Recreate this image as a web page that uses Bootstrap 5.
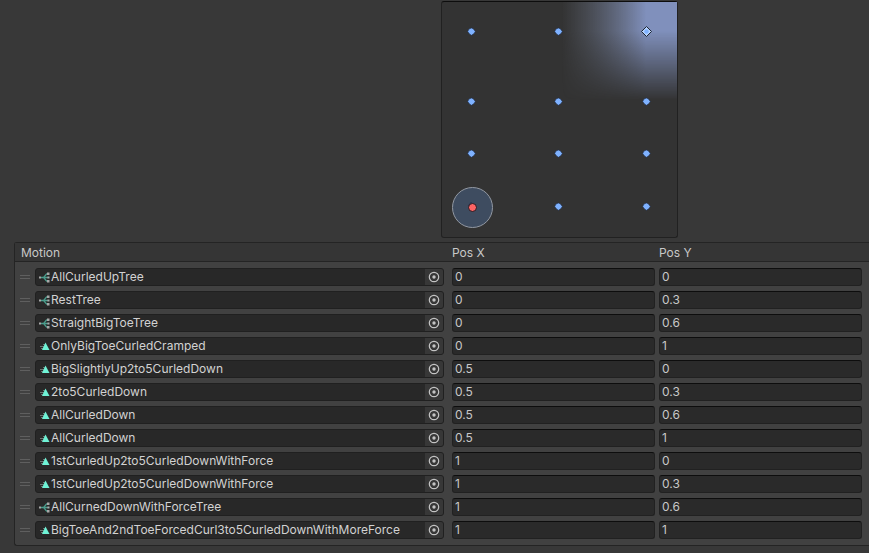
<!DOCTYPE html>
<html lang="en" data-bs-theme="dark">
<head>
<meta charset="utf-8">
<meta name="viewport" content="width=device-width, initial-scale=1">
<title>Blend Tree</title>
<link rel="stylesheet" href="https://cdn.jsdelivr.net/npm/bootstrap@5.3.0/dist/css/bootstrap.min.css">
<style>
body { background: #383838; color: #c8c8c8; font: 12px/16px Inter, "Liberation Sans", sans-serif; }
.graph-area { padding: 1px 0 4px 250px; }
.blend-graph { width: 237px; height: 237px; background: #333; border: 1px solid #212121; border-top-color: #0d0d0d; border-radius: 3px; }
.motion-panel { margin-left: 14px; background: #414141; border: 1px solid #242424; border-right: 0; border-radius: 3px 0 0 3px; padding-bottom: 4px; }
.motion-table tr { display: grid; grid-template-columns: 20px minmax(0, 409fr) minmax(0, 203fr) minmax(0, 203fr); column-gap: 4px; padding-right: 7px; }
.motion-table td, .motion-table th { padding: 0; font-weight: 400; }
.motion-table thead tr { background: #353535; border-bottom: 1px solid #242424; height: 19px; line-height: 20px; margin-bottom: 3px; }
.motion-table tbody tr { height: 23px; align-items: center; }
.motion-table .motion-cell { margin-left: -4px; padding-right: 4px; }
.motion-title { grid-column: 1 / 3; padding-left: 6px !important; }
.field-box { height: 18px; background: #2a2a2a; border: 1px solid #212121; border-top-color: #0d0d0d; border-radius: 3px; color: #d2d2d2; }
.object-box { border-color: #202020; background: #282828; }
.object-box input, .value-box { font: inherit; color: inherit; min-width: 0; outline: 0; }
.object-box input { background: none; border: 0; padding: 0; }
.value-box { display: block; width: 100%; padding: 0 2px; }
.pick { width: 18px; background: #373737; color: #c4c4c4; border: 0; padding: 0; border-radius: 0 2px 2px 0; }
.grip { width: 10px; height: 4px; border: solid #5f5f5f; border-width: 1px 0; margin-left: 5px; }
.asset { width: 12px; height: 12px; margin-left: 3px; }
svg { display: block; flex: none; }
</style>
<script src="https://cdn.jsdelivr.net/npm/bootstrap@5.3.0/dist/js/bootstrap.bundle.min.js"></script>
</head>
<body class="overflow-x-hidden">
<svg width="0" height="0" class="position-absolute" aria-hidden="true">
  <symbol id="tree" viewBox="0 0 12 12">
    <path d="M2 6.500h7M4 6.500c2 0 2-4 5-4M4 6.500c2 0 2 4 5 4" stroke="#4a9c8c" stroke-width="1.300" fill="none"/>
    <path d="M0 5.500h2v2H0zM8 1.500h2.500v2.500H8zM8.500 5.500h2v2h-2zM8 9h2.500v2.500H8z" fill="#a8a8a8"/>
  </symbol>
  <symbol id="clip" viewBox="0 0 12 12">
    <path d="M1 6.500h4M2 8.500h3M4 4.500h2" stroke="#6c7573" fill="none"/>
    <path d="M6.500 2.500 10.500 10H3z" fill="#6ff3d6"/>
  </symbol>
  <symbol id="target" viewBox="0 0 12 12">
    <circle cx="6" cy="6" r="4.700" fill="none" stroke="currentColor" stroke-width="1.200"/>
    <circle cx="6" cy="6" r="1.700" fill="currentColor"/>
  </symbol>
</svg>
<main>
  <div class="graph-area d-flex justify-content-center">
    <div class="blend-graph">
      <svg width="235" height="235" viewBox="0 0 235 235" role="img" aria-label="Blend positions">
        <defs>
          <linearGradient id="across" gradientUnits="userSpaceOnUse" x1="120" y1="0" x2="204" y2="0">
            <stop offset="0" stop-color="#6c7486" stop-opacity="0"/>
            <stop offset=".2" stop-color="#6c7486" stop-opacity=".24"/>
            <stop offset="1" stop-color="#8090bc"/>
          </linearGradient>
          <linearGradient id="down" gradientUnits="userSpaceOnUse" x1="0" y1="29" x2="0" y2="98">
            <stop offset="0" stop-color="#fff"/>
            <stop offset="1" stop-color="#fff" stop-opacity="0"/>
          </linearGradient>
          <mask id="fade" style="mask-type:alpha"><rect width="235" height="235" fill="url(#down)"/></mask>
          <path id="pt" d="M0-3.500 2-2.500 3.800 0 2.500 2 0 3.800-2 2.500-3.800 0-2.500-2.500z" fill="#7fb2ff" stroke="#203050" stroke-width=".6"/>
        </defs>
        <rect x="120" width="115" height="98" fill="url(#across)" mask="url(#fade)"/>
        <g>
          <use href="#pt" x="29.500" y="29.500"/><use href="#pt" x="116.500" y="29.500"/>
          <use href="#pt" x="29.500" y="99.500"/><use href="#pt" x="116.500" y="99.500"/><use href="#pt" x="204.500" y="99.500"/>
          <use href="#pt" x="29.500" y="151.500"/><use href="#pt" x="116.500" y="151.500"/><use href="#pt" x="204.500" y="151.500"/>
          <use href="#pt" x="116.500" y="204.500"/><use href="#pt" x="204.500" y="204.500"/>
        </g>
        <path d="M204.500 24.500l5 5-5 5-5-5z" fill="#b8d4ff" stroke="#1c2430"/>
        <circle cx="204.500" cy="29.500" r="2.200" fill="#7fb2ff"/>
        <circle cx="30.500" cy="205.500" r="20" fill="#3e4c60" stroke="#9298a2"/>
        <path d="M26 204l3.500-4" stroke="#203050"/>
        <circle cx="30.500" cy="205.500" r="4" fill="#ff6464" stroke="#221c24"/>
      </svg>
    </div>
  </div>
  <section class="motion-panel">
    <table class="motion-table d-block">
      <thead class="d-block"><tr><th scope="col" class="motion-title">Motion</th><th scope="col">Pos X</th><th scope="col">Pos Y</th></tr></thead>
      <tbody class="d-block" id="motions"></tbody>
    </table>
  </section>
</main>
<script>
const motions = [
  ["tree", "AllCurledUpTree", "0", "0"],
  ["tree", "RestTree", "0", "0.3"],
  ["tree", "StraightBigToeTree", "0", "0.6"],
  ["clip", "OnlyBigToeCurledCramped", "0", "1"],
  ["clip", "BigSlightlyUp2to5CurledDown", "0.5", "0"],
  ["clip", "2to5CurledDown", "0.5", "0.3"],
  ["clip", "AllCurledDown", "0.5", "0.6"],
  ["clip", "AllCurledDown", "0.5", "1"],
  ["clip", "1stCurledUp2to5CurledDownWithForce", "1", "0"],
  ["clip", "1stCurledUp2to5CurledDownWithForce", "1", "0.3"],
  ["tree", "AllCurnedDownWithForceTree", "1", "0.6"],
  ["clip", "BigToeAnd2ndToeForcedCurl3to5CurledDownWithMoreForce", "1", "1"]
];
document.getElementById("motions").innerHTML = motions.map(([icon, name, x, y]) => `
  <tr>
    <td><div class="grip"></div></td>
    <td class="motion-cell"><div class="field-box object-box d-flex">
      <svg class="asset align-self-center" aria-hidden="true"><use href="#${icon}"/></svg>
      <input class="flex-grow-1" type="text" value="${name}" aria-label="Motion">
      <button class="pick d-flex align-items-center justify-content-center" type="button" aria-label="Select motion"><svg width="12" height="12"><use href="#target"/></svg></button>
    </div></td>
    <td><input class="field-box value-box" type="text" value="${x}" aria-label="Pos X"></td>
    <td><input class="field-box value-box" type="text" value="${y}" aria-label="Pos Y"></td>
  </tr>`).join("");
</script>
</body>
</html>
